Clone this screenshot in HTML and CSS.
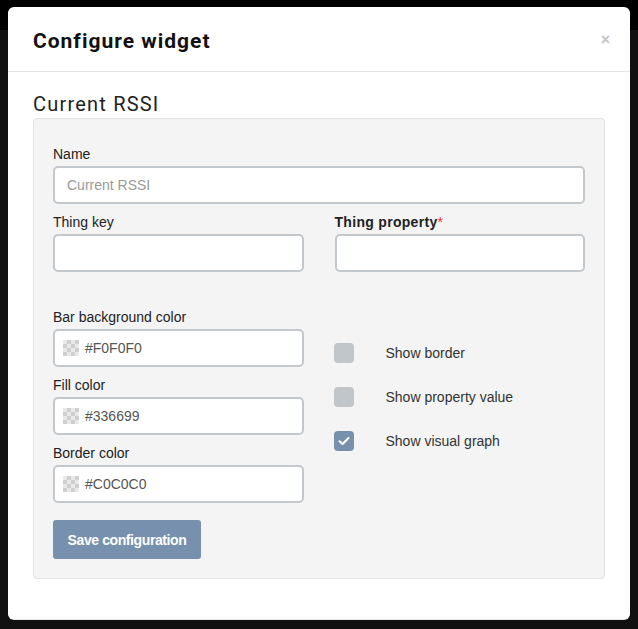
FILE: index.html
```html
<!DOCTYPE html>
<html>
<head>
<meta charset="utf-8">
<link rel="stylesheet" href="styles.css">
</head>
<body>
<div class="modal">
  <div class="modal-header">
    <h4 class="modal-title">Configure widget</h4>
    <span class="close">×</span>
  </div>
  <div class="modal-body">
    <h3 class="widget-name">Current RSSI</h3>
    <div class="panel">
      <div class="group">
        <label class="label">Name</label>
        <div class="input"><span class="placeholder">Current RSSI</span></div>
      </div>
      <div class="row">
        <div class="group">
          <label class="label">Thing key</label>
          <div class="input"></div>
        </div>
        <div class="group">
          <label class="label bold">Thing property<span class="req">*</span></label>
          <div class="input"></div>
        </div>
      </div>
      <div class="row lower">
        <div class="col">
          <div class="group">
            <label class="label">Bar background color</label>
            <div class="input color"><span class="swatch"></span><span class="value">#F0F0F0</span></div>
          </div>
          <div class="group">
            <label class="label">Fill color</label>
            <div class="input color"><span class="swatch"></span><span class="value">#336699</span></div>
          </div>
          <div class="group">
            <label class="label">Border color</label>
            <div class="input color"><span class="swatch"></span><span class="value">#C0C0C0</span></div>
          </div>
        </div>
        <div class="col checks">
          <div class="check"><span class="box"></span><span class="check-label">Show border</span></div>
          <div class="check"><span class="box"></span><span class="check-label">Show property value</span></div>
          <div class="check"><span class="box on"><svg width="12" height="10" viewBox="0 0 12 10"><path d="M1.5 5.2 L4.6 8 L10.5 2" fill="none" stroke="#fff" stroke-width="2" stroke-linecap="round" stroke-linejoin="round"/></svg></span><span class="check-label">Show visual graph</span></div>
        </div>
      </div>
      <button class="btn">Save configuration</button>
    </div>
  </div>
</div>
</body>
</html>
```

FILE: styles.css
```css
html, body {
  margin: 0;
  padding: 0;
}
body {
  width: 638px;
  height: 629px;
  background: linear-gradient(#000 0, #000 30px, #111 30px, #111 100%);
  overflow: hidden;
  font-family: "Liberation Sans", Arial, sans-serif;
}
.modal {
  margin: 7px 0 0 8px;
  width: 622px;
  height: 612px;
  background: #fff;
  border-radius: 6px;
  box-shadow: 0 1px 0 #e6e6e6;
  box-sizing: border-box;
}
.modal-header {
  height: 65px;
  border-bottom: 1px solid #e5e5e5;
  box-sizing: border-box;
  padding: 0 25px;
  display: flex;
  align-items: center;
  justify-content: space-between;
}
.modal-title {
  margin: 0;
  font-family: Roboto, "Noto Sans", sans-serif;
  font-size: 21px;
  font-weight: 700;
  color: #111;
  letter-spacing: 1px;
  padding-top: 3px;
}
.close {
  color: #c4c4c4;
  font-size: 16px;
  font-weight: 700;
  line-height: 1;
  margin-right: -5px;
  padding-top: 2px;
}
.modal-body {
  padding: 18px 25px 0;
}
.widget-name {
  margin: 0;
  font-family: Roboto, "Noto Sans", sans-serif;
  font-weight: 400;
  font-size: 20px;
  line-height: 28px;
  height: 28px;
  color: #222;
  letter-spacing: 1.2px;
}
.panel {
  background: #f4f4f4;
  border: 1px solid #e2e2e2;
  border-radius: 4px;
  padding: 25px 19px 19px;
  height: 461px;
  box-sizing: border-box;
}
.group {
  margin-bottom: 8px;
}
.label {
  display: block;
  font-size: 14px;
  line-height: 20px;
  color: #222;
  margin-bottom: 2px;
}
.label.bold {
  font-weight: 700;
  letter-spacing: 0.3px;
}
.req {
  color: #e33;
  font-weight: 400;
}
.input {
  height: 38px;
  box-sizing: border-box;
  background: #fff;
  border: 2px solid #c3c8cc;
  border-radius: 5px;
  display: flex;
  align-items: center;
  padding: 0 12px;
  font-size: 14px;
}
.placeholder {
  color: #999;
}
.row {
  display: flex;
  gap: 31px;
}
.row > .group, .row > .col {
  flex: 1;
  min-width: 0;
}
.lower {
  margin-top: 27px;
}
.color {
  padding-left: 8px;
}
.swatch {
  width: 16px;
  height: 16px;
  margin-right: 6px;
  background-color: #e9e9e9;
  background-image:
    linear-gradient(45deg, #cfcfcf 25%, transparent 25%, transparent 75%, #cfcfcf 75%),
    linear-gradient(45deg, #cfcfcf 25%, transparent 25%, transparent 75%, #cfcfcf 75%);
  background-size: 8px 8px;
  background-position: 0 0, 4px 4px;
}
.value {
  color: #555;
}
.checks {
  padding-top: 36px;
  display: flex;
  flex-direction: column;
  gap: 24px;
}
.check {
  display: flex;
  align-items: center;
  height: 20px;
}
.box {
  width: 20px;
  height: 20px;
  border-radius: 4px;
  background: #c1c6cb;
  margin-left: -1px;
  display: flex;
  align-items: center;
  justify-content: center;
}
.box.on {
  background: #7690ae;
}
.check-label {
  margin-left: 32px;
  font-size: 14px;
  color: #333;
}
.btn {
  margin-top: 9px;
  height: 39px;
  width: 148px;
  border: 0;
  border-radius: 3px;
  background: #7690ae;
  color: #fff;
  font-family: "Liberation Sans", Arial, sans-serif;
  font-weight: 700;
  font-size: 14px;
  letter-spacing: -0.4px;
  padding: 0;
}
```
